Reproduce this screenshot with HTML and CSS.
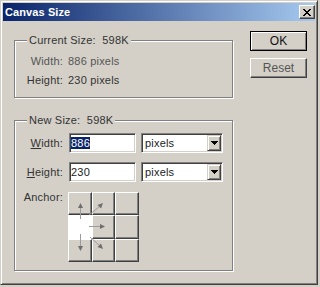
FILE: index.html
```html
<!DOCTYPE html>
<html lang="en">

<head>
    <meta charset="UTF-8">
    <title>Canvas Size</title>
    <link rel="stylesheet" href="styles.css">
</head>

<body>

    <div class="window">
        <div class="titlebar">
            <span class="title">Canvas Size</span>
            <span class="close">
                <svg width="8" height="7" viewBox="0 0 8 7" shape-rendering="crispEdges">
                    <path d="M0 0h2v1h-2zM6 0h2v1h-2zM1 1h2v1h-2zM5 1h2v1h-2zM2 2h4v1h-4zM3 3h2v1h-2zM2 4h4v1h-4zM1 5h2v1h-2zM5 5h2v1h-2zM0 6h2v1h-2zM6 6h2v1h-2z" fill="#000"/>
                </svg>
            </span>
        </div>

        <div class="main">
            <div class="groups">
                <div class="group current">
                    <span class="group-title">Current Size:&nbsp; 598K</span>
                    <div class="info-row dim"><span class="info-label">Width:</span><span>886 pixels</span></div>
                    <div class="info-row"><span class="info-label">Height:</span><span>230 pixels</span></div>
                </div>

                <div class="group new">
                    <span class="group-title">New Size:&nbsp; 598K</span>
                    <div class="field-row">
                        <label class="field-label"><u>W</u>idth:</label>
                        <div class="textbox"><span class="selected">886</span></div>
                        <div class="select"><span>pixels</span><span class="drop"><svg width="7" height="4" viewBox="0 0 7 4" shape-rendering="crispEdges"><path d="M0 0h7v1h-1v1h-1v1h-1v1h-1v-1h-1v-1h-1v-1h-1z" fill="#000"/></svg></span></div>
                    </div>
                    <div class="field-row">
                        <label class="field-label"><u>H</u>eight:</label>
                        <div class="textbox"><span>230</span></div>
                        <div class="select"><span>pixels</span><span class="drop"><svg width="7" height="4" viewBox="0 0 7 4" shape-rendering="crispEdges"><path d="M0 0h7v1h-1v1h-1v1h-1v1h-1v-1h-1v-1h-1v-1h-1z" fill="#000"/></svg></span></div>
                    </div>
                    <div class="anchor-row">
                        <span class="field-label anchor-label">Anchor:</span>
                        <div class="anchor">
                            <span class="cell"></span>
                            <span class="cell"></span>
                            <span class="cell"></span>
                            <span class="cell on"></span>
                            <span class="cell"></span>
                            <span class="cell"></span>
                            <span class="cell"></span>
                            <span class="cell"></span>
                            <span class="cell"></span>
                            <!-- flechas alrededor de la celda elegida -->
                            <svg class="arrows" width="71" height="70" viewBox="0 0 71 70">
                                <g stroke="#9c9c9c" stroke-width="1">
                                    <line x1="12.5" y1="27" x2="12.5" y2="15"/>
                                    <line x1="12.5" y1="42" x2="12.5" y2="55"/>
                                    <line x1="21" y1="34.5" x2="33" y2="34.5"/>
                                    <line x1="21" y1="23" x2="31" y2="15"/>
                                    <line x1="22" y1="45" x2="31" y2="53"/>
                                </g>
                                <g fill="#6e6e6e">
                                    <polygon points="10,16 12.5,11 15,16"/>
                                    <polygon points="10,54 12.5,59 15,54"/>
                                    <polygon points="32,32 37,34.5 32,37"/>
                                    <polygon points="35,11 29.5,13 33,16.5"/>
                                    <polygon points="35,57 29.5,55 33,51.5"/>
                                </g>
                            </svg>
                        </div>
                    </div>
                </div>
            </div>

            <div class="buttons">
                <button class="btn default">OK</button>
                <button class="btn reset">Reset</button>
            </div>
        </div>
    </div>

</body>

</html>
```

FILE: styles.css
```css
* {
    box-sizing: border-box;
}

body {
    margin: 0;
    background-color: #d4d0c8;
    font-family: "Liberation Sans", Arial, sans-serif;
    font-size: 11px;
    letter-spacing: 0.2px;
    color: #333;
}

/* Ventana */

.window {
    width: 318px;
    height: 285px;
    padding: 2px;
    background-color: #d4d0c8;
    border: 1px solid;
    border-color: #d4d0c8 #404040 #404040 #d4d0c8;
    box-shadow: inset 1px 1px #fff, inset -1px -1px #808080;
}

.titlebar {
    height: 18px;
    display: flex;
    align-items: center;
    justify-content: space-between;
    padding-left: 2px;
    background: linear-gradient(to right, #0a246a, #a6caf0);
}

.title {
    color: white;
    font-weight: bold;
    letter-spacing: 0.1px;
}

.close {
    width: 16px;
    height: 14px;
    display: flex;
    align-items: center;
    justify-content: center;
    background-color: #d4d0c8;
    border: 1px solid;
    border-color: #fff #404040 #404040 #fff;
    box-shadow: inset -1px -1px #808080;
}

.main {
    display: flex;
}

.groups {
    width: 219px;
    margin-left: 11px;
}

/* Grupos */

.group {
    position: relative;
    border: 1px solid #808080;
    box-shadow: inset 1px 1px #fff, 1px 1px #fff;
}

.group-title {
    position: absolute;
    top: -7px;
    left: 12px;
    padding: 0 2px;
    line-height: 13px;
    background-color: #d4d0c8;
}

.current {
    margin-top: 19px;
    padding: 11px 0 7px;
}

.info-row {
    display: flex;
    height: 19px;
    line-height: 19px;
}

.info-row.dim {
    color: #555;
}

.info-label {
    width: 48px;
    margin-right: 5px;
    text-align: right;
}

.new {
    margin-top: 22px;
    padding: 12px 0 8px;
}

.field-row {
    display: flex;
    align-items: center;
    height: 20px;
}

.field-row + .field-row {
    margin-top: 9px;
}

.field-label {
    width: 48px;
    text-align: right;
}

.textbox,
.select {
    height: 20px;
    background-color: #fff;
    border: 1px solid;
    border-color: #808080 #fff #fff #808080;
    box-shadow: inset 1px 1px #404040, inset -1px -1px #d4d0c8;
    color: #222;
}

.textbox {
    width: 67px;
    margin-left: 6px;
    padding: 2px 1px;
    line-height: 14px;
}

.selected {
    background-color: #0a246a;
    color: white;
}

.select {
    width: 82px;
    margin-left: 5px;
    padding: 1px 1px 1px 3px;
    display: flex;
    align-items: center;
    justify-content: space-between;
}

.drop {
    width: 14px;
    height: 16px;
    display: flex;
    align-items: center;
    justify-content: center;
    background-color: #d4d0c8;
    border: 1px solid;
    border-color: #d4d0c8 #404040 #404040 #d4d0c8;
    box-shadow: inset 1px 1px #fff, inset -1px -1px #808080;
}

/* Ancla */

.anchor-row {
    display: flex;
    align-items: flex-start;
    margin-top: 10px;
}

.anchor-label {
    margin-top: -1px;
    line-height: 13px;
}

.anchor {
    position: relative;
    margin-left: 5px;
    display: grid;
    grid-template-columns: 24px 23px 24px;
    grid-template-rows: 23px 24px 23px;
}

.cell {
    background-color: #d4d0c8;
    border: 1px solid;
    border-color: #fff #404040 #404040 #fff;
    box-shadow: inset -1px -1px #808080;
}

.cell.on {
    background-color: #fff;
    border-color: #fff;
    box-shadow: none;
}

.arrows {
    position: absolute;
    top: 0;
    left: 0;
    pointer-events: none;
}

/* Botones */

.buttons {
    display: flex;
    flex-direction: column;
    gap: 7px;
    margin-left: 17px;
    margin-top: 10px;
}

.btn {
    width: 57px;
    height: 20px;
    padding: 0;
    font-family: inherit;
    font-size: 12px;
    color: #111;
    background-color: #d4d0c8;
    border: 1px solid;
    border-color: #fff #404040 #404040 #fff;
    box-shadow: inset -1px -1px #808080;
}

.btn.default {
    border-color: #000;
    box-shadow: inset 1px 1px #fff, inset -1px -1px #808080;
}

.btn.reset {
    color: #555;
}
```
